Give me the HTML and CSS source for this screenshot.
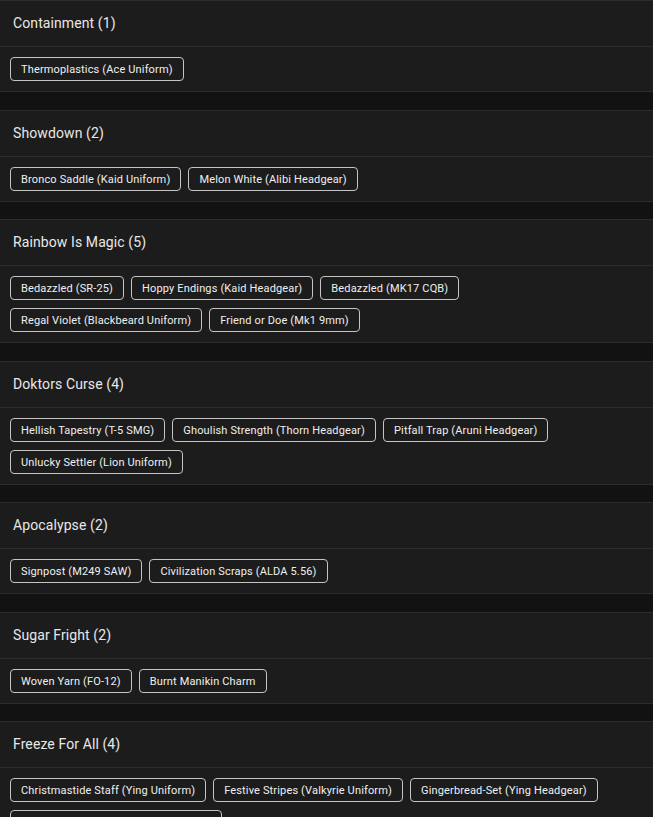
FILE: index.html
```html
<!DOCTYPE html>
<html>
<head>
<meta charset="utf-8">
<link rel="stylesheet" href="styles.css">
</head>
<body>
<div class="list">
  <section class="card">
    <div class="card-head">Containment (1)</div>
    <div class="card-body">
      <span class="chip">Thermoplastics (Ace Uniform)</span>
    </div>
  </section>
  <section class="card">
    <div class="card-head">Showdown (2)</div>
    <div class="card-body">
      <span class="chip">Bronco Saddle (Kaid Uniform)</span>
      <span class="chip">Melon White (Alibi Headgear)</span>
    </div>
  </section>
  <section class="card">
    <div class="card-head">Rainbow Is Magic (5)</div>
    <div class="card-body">
      <span class="chip">Bedazzled (SR-25)</span>
      <span class="chip">Hoppy Endings (Kaid Headgear)</span>
      <span class="chip">Bedazzled (MK17 CQB)</span>
      <span class="chip">Regal Violet (Blackbeard Uniform)</span>
      <span class="chip">Friend or Doe (Mk1 9mm)</span>
    </div>
  </section>
  <section class="card">
    <div class="card-head">Doktors Curse (4)</div>
    <div class="card-body">
      <span class="chip">Hellish Tapestry (T-5 SMG)</span>
      <span class="chip">Ghoulish Strength (Thorn Headgear)</span>
      <span class="chip">Pitfall Trap (Aruni Headgear)</span>
      <span class="chip">Unlucky Settler (Lion Uniform)</span>
    </div>
  </section>
  <section class="card">
    <div class="card-head">Apocalypse (2)</div>
    <div class="card-body">
      <span class="chip">Signpost (M249 SAW)</span>
      <span class="chip">Civilization Scraps (ALDA 5.56)</span>
    </div>
  </section>
  <section class="card">
    <div class="card-head">Sugar Fright (2)</div>
    <div class="card-body">
      <span class="chip">Woven Yarn (FO-12)</span>
      <span class="chip">Burnt Manikin Charm</span>
    </div>
  </section>
  <section class="card">
    <div class="card-head">Freeze For All (4)</div>
    <div class="card-body">
      <span class="chip">Christmastide Staff (Ying Uniform)</span>
      <span class="chip">Festive Stripes (Valkyrie Uniform)</span>
      <span class="chip">Gingerbread-Set (Ying Headgear)</span>
      <span class="chip">Peppermint Twist (Valkyrie Headgear)</span>
    </div>
  </section>
</div>
</body>
</html>
```
FILE: styles.css
```css
html, body {
  margin: 0;
  padding: 0;
  background: #121212;
}
body {
  font-family: Roboto, "Liberation Sans", sans-serif;
  color: #e6e6e6;
}
.list {
  display: flex;
  flex-direction: column;
  gap: 17.5px;
}
.card {
  background: #1c1c1c;
  border-top: 1px solid #2c2c2c;
  border-bottom: 1px solid #2c2c2c;
}
.card-head {
  height: 45px;
  line-height: 45px;
  padding-left: 13px;
  font-size: 14px;
  letter-spacing: 0.1px;
  color: #e8e8e8;
  border-bottom: 1px solid #2c2c2c;
}
.card-body {
  display: flex;
  flex-wrap: wrap;
  column-gap: 7px;
  row-gap: 8px;
  padding: 10px 10px;
}
.chip {
  display: inline-block;
  height: 22px;
  line-height: 23px;
  padding: 0 10px;
  border: 1px solid #c4c4c4;
  border-radius: 4px;
  font-size: 11px;
  letter-spacing: 0.15px;
  color: #f0f0f0;
  white-space: nowrap;
}
```
